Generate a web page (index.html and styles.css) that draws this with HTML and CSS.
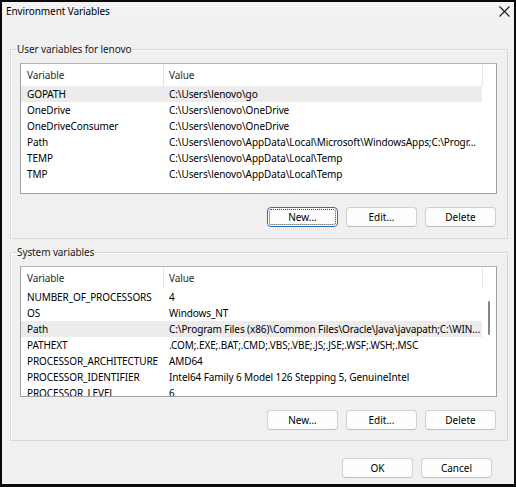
FILE: index.html
```html
<!DOCTYPE html>
<html>
<head>
<meta charset="utf-8">
<link rel="stylesheet" href="styles.css">
</head>
<body>
<div class="window">
  <div class="titlebar">
    <span class="title">Environment Variables</span>
    <svg class="close" width="11" height="11" viewBox="0 0 11 11"><path d="M0.5 0.5 L10.5 10.5 M10.5 0.5 L0.5 10.5" stroke="#1a1a1a" stroke-width="1.1" fill="none"/></svg>
  </div>
  <div class="content">
    <fieldset class="group">
      <legend>User variables for lenovo</legend>
      <div class="list">
        <div class="row head"><div class="c1">Variable</div><div class="c2">Value</div><div class="c3"></div></div>
        <div class="row sel"><div class="c1">GOPATH</div><div class="c2">C:\Users\lenovo\go</div></div>
        <div class="row"><div class="c1">OneDrive</div><div class="c2">C:\Users\lenovo\OneDrive</div></div>
        <div class="row"><div class="c1">OneDriveConsumer</div><div class="c2">C:\Users\lenovo\OneDrive</div></div>
        <div class="row"><div class="c1">Path</div><div class="c2">C:\Users\lenovo\AppData\Local\Microsoft\WindowsApps;C:\Progr...</div></div>
        <div class="row"><div class="c1">TEMP</div><div class="c2">C:\Users\lenovo\AppData\Local\Temp</div></div>
        <div class="row"><div class="c1">TMP</div><div class="c2">C:\Users\lenovo\AppData\Local\Temp</div></div>
      </div>
      <div class="buttons">
        <button class="btn focus">New...</button>
        <button class="btn">Edit...</button>
        <button class="btn">Delete</button>
      </div>
    </fieldset>
    <fieldset class="group group2">
      <legend>System variables</legend>
      <div class="list">
        <div class="row head"><div class="c1">Variable</div><div class="c2">Value</div><div class="c3"></div></div>
        <div class="row"><div class="c1">NUMBER_OF_PROCESSORS</div><div class="c2">4</div></div>
        <div class="row"><div class="c1">OS</div><div class="c2">Windows_NT</div></div>
        <div class="row sel"><div class="c1">Path</div><div class="c2">C:\Program Files (x86)\Common Files\Oracle\Java\javapath;C:\WIN...</div></div>
        <div class="row"><div class="c1">PATHEXT</div><div class="c2">.COM;.EXE;.BAT;.CMD;.VBS;.VBE;.JS;.JSE;.WSF;.WSH;.MSC</div></div>
        <div class="row"><div class="c1">PROCESSOR_ARCHITECTURE</div><div class="c2">AMD64</div></div>
        <div class="row"><div class="c1">PROCESSOR_IDENTIFIER</div><div class="c2">Intel64 Family 6 Model 126 Stepping 5, GenuineIntel</div></div>
        <div class="row"><div class="c1">PROCESSOR_LEVEL</div><div class="c2">6</div></div>
        <div class="thumb"></div>
      </div>
      <div class="buttons">
        <button class="btn">New...</button>
        <button class="btn">Edit...</button>
        <button class="btn">Delete</button>
      </div>
    </fieldset>
    <div class="buttons footer">
      <button class="btn">OK</button>
      <button class="btn">Cancel</button>
    </div>
  </div>
</div>
</body>
</html>
```

FILE: styles.css
```css
* { box-sizing: border-box; }
html, body { margin: 0; padding: 0; }
body {
  background: #0a0a0a;
  width: 516px;
  height: 487px;
  overflow: hidden;
  font-family: "Noto Sans", "Open Sans", sans-serif;
  font-size: 10px;
  letter-spacing: -0.1px;
  color: #000;
}
.window {
  margin: 2px 2px 0 2px;
  width: 512px;
  height: 482px;
  background: #f0f0f0;
  display: flex;
  flex-direction: column;
}
.titlebar {
  height: 24px;
  display: flex;
  justify-content: space-between;
  align-items: flex-start;
  padding: 0 4px 0 4px;
  background: linear-gradient(#f4f4f6, #f0f0f0);
}
.title {
  line-height: 18px;
  color: #000;
}
.close {
  margin-top: 4px;
  margin-right: 0;
}
.content {
  padding: 15px 6px 0 8px;
  display: flex;
  flex-direction: column;
}
.group {
  margin: 0;
  width: 498px;
  border: 1px solid #d9d9d9;
  box-shadow: inset 1px 1px 0 #fbfbfb;
  padding: 6px 10px 11px 9px;
  min-width: 0;
}
.group2 {
  margin-top: 5px;
  padding-bottom: 10px;
}
legend {
  padding: 0 1px;
  margin-left: -4px;
  line-height: 16px;
  color: #1a1a1a;
}
.list {
  position: relative;
  height: 131px;
  background: #fff;
  border: 1px solid #a0a0a0;
  border-top-color: #b4b4b4;
  overflow: hidden;
}
.row {
  display: flex;
  height: 16px;
  line-height: 16px;
  width: 461px;
  white-space: nowrap;
}
.row.head {
  height: 22px;
  line-height: 22px;
  width: 475px;
  color: #2b2b2b;
}
.row.sel { background: #ececec; }
.c1 {
  width: 142px;
  padding-left: 6px;
  flex: none;
  overflow: hidden;
}
.c2 {
  width: 319px;
  padding-left: 6px;
  flex: none;
  overflow: hidden;
}
.c3 { width: 14px; flex: none; }
.head .c2, .head .c3 {
  border-left: 1px solid #e5e5e5;
}
.head .c2 { padding-left: 5px; }
.thumb {
  position: absolute;
  left: 467px;
  top: 34px;
  width: 2px;
  height: 34px;
  background: #858585;
  border-radius: 1px;
}
.buttons {
  display: flex;
  justify-content: flex-end;
  gap: 8px;
  margin-top: 13px;
  padding-right: 1px;
}
.btn {
  width: 71px;
  height: 20px;
  padding: 0;
  font: inherit;
  color: #000;
  background: #fdfdfd;
  border: 1px solid #d0d0d0;
  border-bottom-color: #bdbdbd;
  border-radius: 4px;
}
.btn.focus {
  border-color: #2a6fbf;
  outline: 1px dotted #444;
  outline-offset: -3px;
}
.footer {
  margin-top: 17px;
  padding-right: 16px;
}
```
